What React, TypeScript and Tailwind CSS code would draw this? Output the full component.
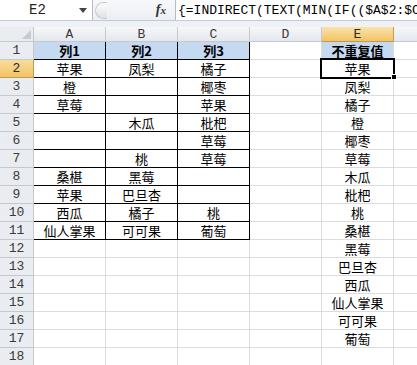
import React from 'react';

const cjk = '"Noto Sans CJK SC", "Noto Sans", sans-serif';
const mono = '"Liberation Mono", "DejaVu Sans Mono", monospace';

const cols = ['A', 'B', 'C', 'D', 'E'];

// A..E, rows 2..18
const rows: string[][] = [
  ['苹果', '凤梨', '橘子', '', '苹果'],
  ['橙', '', '椰枣', '', '凤梨'],
  ['草莓', '', '苹果', '', '橘子'],
  ['', '木瓜', '枇杷', '', '橙'],
  ['', '', '草莓', '', '椰枣'],
  ['', '桃', '草莓', '', '草莓'],
  ['桑椹', '黑莓', '', '', '木瓜'],
  ['苹果', '巴旦杏', '', '', '枇杷'],
  ['西瓜', '橘子', '桃', '', '桃'],
  ['仙人掌果', '可可果', '葡萄', '', '桑椹'],
  ['', '', '', '', '黑莓'],
  ['', '', '', '', '巴旦杏'],
  ['', '', '', '', '西瓜'],
  ['', '', '', '', '仙人掌果'],
  ['', '', '', '', '可可果'],
  ['', '', '', '', '葡萄'],
  ['', '', '', '', ''],
];

function RowHeader({ n, active }: { n: number; active?: boolean }) {
  return (
    <div
      className={
        active
          ? 'flex h-[18px] items-center justify-center border-r border-b border-[#c29a4f] bg-gradient-to-b from-[#f9dc9c] to-[#f2c463] text-[13px] leading-none text-[#2a2a2a]'
          : 'flex h-[18px] items-center justify-center border-r border-b border-[#c5c9cf] bg-[#e9ecf0] text-[13px] leading-none text-[#3a3a3a]'
      }
      style={{ fontFamily: mono }}
    >
      {n}
    </div>
  );
}

function Cell({ text, row, col }: { text: string; row: number; col: number }) {
  // table A1:C11 has black borders
  const inTable = col < 3 && row <= 11;
  const header = row === 1 && (col < 3 || col === 4);
  let cls = 'flex h-[18px] items-center justify-center overflow-hidden whitespace-nowrap text-[13px] leading-none text-black border-b border-r ';
  cls += inTable ? 'border-black ' : 'border-[#dadcdd] ';
  if (header) cls += 'bg-[#c5d9f1] font-bold ';
  else cls += 'bg-white ';
  return (
    <div className={cls} style={{ fontFamily: cjk }}>
      {text}
    </div>
  );
}

export default function App() {
  return (
    <div className="h-[365px] w-[417px] overflow-hidden bg-white">
      {/* formula bar */}
      <div className="flex h-[21px] items-stretch border-b border-[#c4cad3] bg-gradient-to-b from-[#f7f8fa] to-[#eceff3]">
        <div
          className="flex w-[93px] items-center border-r border-[#b7bcc4] bg-white pl-[29px] text-[14px] leading-none text-[#222]"
          style={{ fontFamily: mono }}
        >
          E2
          <svg className="ml-[33px]" width="8" height="5" viewBox="0 0 8 5">
            <path d="M0 0H8L4 5Z" fill="#444" />
          </svg>
        </div>
        <div className="flex w-[82px] items-center">
          <div className="ml-[2px] h-[17px] w-[12px] rounded-l-full border border-r-0 border-[#c6cad0] bg-gradient-to-b from-[#fdfdfd] to-[#dfe2e6]" />
          <span
            className="ml-auto mr-[9px] text-[14px] font-bold italic leading-none text-[#333]"
            style={{ fontFamily: '"Liberation Serif", serif' }}
          >
            f<span className="text-[11px]">x</span>
          </span>
        </div>
        <div
          className="flex min-w-0 flex-1 items-center overflow-hidden whitespace-nowrap border-l border-[#b7bcc4] bg-white pl-[2px] text-[13px] leading-none text-black"
          style={{ fontFamily: mono }}
        >
          {'{=INDIRECT(TEXT(MIN(IF(($A$2:$C'}
        </div>
      </div>
      <div className="h-[6px] bg-[#eef1f5]" />

      {/* sheet grid */}
      <div className="grid grid-cols-[34px_72px_72px_72px_72px_72px_23px]">
        {/* column headers */}
        <div className="flex h-[15px] items-end justify-end border-r border-b border-[#c5c9cf] bg-[#e9ecf0] pb-[2px] pr-[2px]">
          <svg width="9" height="9" viewBox="0 0 9 9">
            <path d="M9 0V9H0Z" fill="#c8ccd2" />
          </svg>
        </div>
        {cols.map((c, i) => (
          <div
            key={c}
            className={
              i === 4
                ? 'flex h-[15px] items-center justify-center border-r border-b border-[#c29a4f] bg-gradient-to-b from-[#fbe2a9] to-[#f2c463] text-[13px] leading-none text-[#2a2a2a]'
                : 'flex h-[15px] items-center justify-center border-r border-b border-[#c5c9cf] bg-gradient-to-b from-[#f6f7f9] to-[#e4e8ed] text-[13px] leading-none text-[#3a3a3a]'
            }
            style={{ fontFamily: mono }}
          >
            {c}
          </div>
        ))}
        <div className="h-[15px] border-b border-[#c5c9cf] bg-gradient-to-b from-[#f6f7f9] to-[#e4e8ed]" />

        {/* row 1 */}
        <RowHeader n={1} />
        <Cell text="列1" row={1} col={0} />
        <Cell text="列2" row={1} col={1} />
        <Cell text="列3" row={1} col={2} />
        <Cell text="" row={1} col={3} />
        <Cell text="不重复值" row={1} col={4} />
        <div className="h-[18px] border-b border-[#dadcdd]" />

        {rows.map((r, ri) => {
          const rowNum = ri + 2;
          return (
            <React.Fragment key={rowNum}>
              <RowHeader n={rowNum} active={rowNum === 2} />
              {r.map((t, ci) =>
                rowNum === 2 && ci === 4 ? (
                  <div key={ci} className="relative h-[18px] border-b border-r border-[#dadcdd]">
                    <div
                      className="absolute -left-[2px] -top-[2px] flex h-[21px] w-[75px] items-center justify-center border-2 border-black bg-white text-[13px] leading-none text-black"
                      style={{ fontFamily: cjk }}
                    >
                      {t}
                    </div>
                    <div className="absolute -bottom-[3px] -right-[4px] h-[6px] w-[6px] border border-white bg-black" />
                  </div>
                ) : (
                  <Cell key={ci} text={t} row={rowNum} col={ci} />
                )
              )}
              <div className="h-[18px] border-b border-[#dadcdd]" />
            </React.Fragment>
          );
        })}
      </div>
    </div>
  );
}
